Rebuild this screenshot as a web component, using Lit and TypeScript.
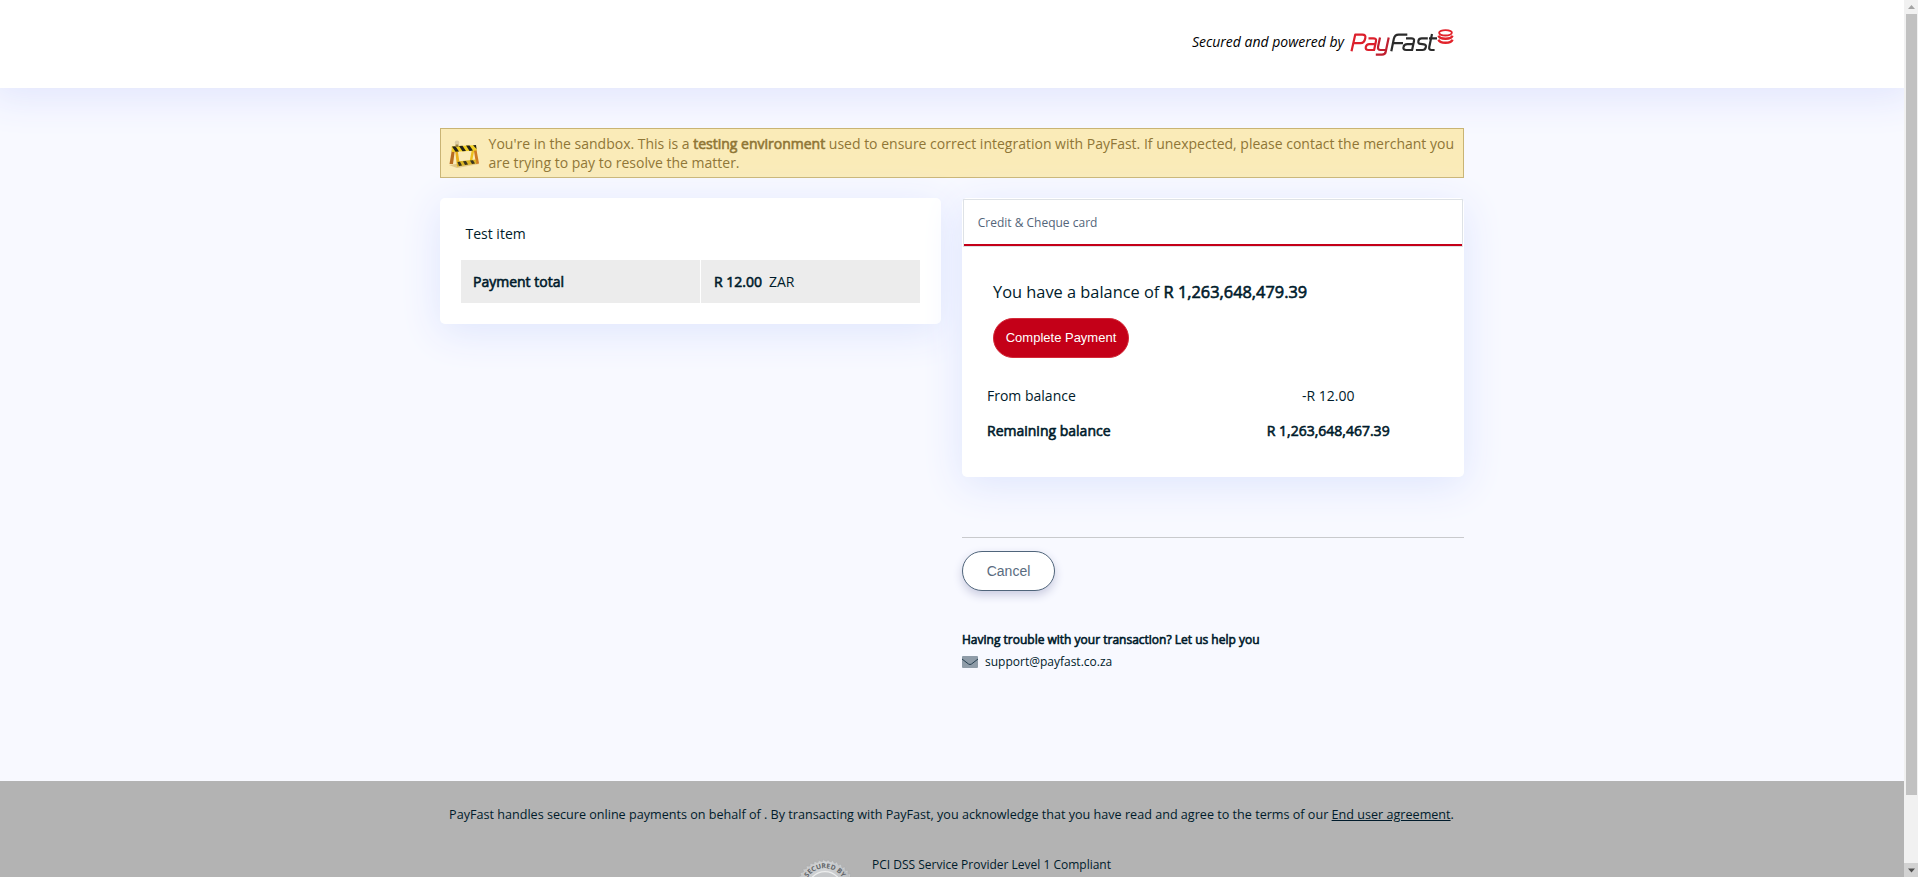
import { LitElement, html, css, svg } from "lit";
import { customElement } from "lit/decorators.js";

const teeth = Array.from({ length: 40 }, (_, i) => i * 9);

@customElement("app-root")
export class AppRoot extends LitElement {
  static styles = css`
    :host { display: flex; width: 100%; height: 877px; overflow: hidden; background: #f8f9ff;
      font-family: "Open Sans", sans-serif; font-size: 14px; color: #001b2b; }
    * { box-sizing: border-box; }
    .page { width: 1904px; height: 877px; overflow: hidden; display: flex; flex-direction: column; }
    header { height: 88px; flex: none; background: #fff; box-shadow: 0 0 40px 10px #e1e5fd; }
    .wrap { width: 1024px; margin: 0 auto; }
    .brand { display: flex; justify-content: flex-end; padding: 28px 8px 0 0; color: #000; }
    .brand em { line-height: 28px; margin-right: 6px; }
    .logo { display: block; width: 106px; height: 30px; margin-top: 1px; }
    main { height: 693px; flex: none; padding-top: 40px; }
    .b { -webkit-text-stroke: 0.6px currentColor; }
    .notice { height: 50px; border: 1px solid #c9b474; background: #faebb8; color: #8f7636;
      display: flex; padding: 5px 0 0 7px; line-height: 19px; white-space: nowrap; }
    .notice svg { width: 32px; height: 30px; margin: 6px 8.6px 0 0; flex: none; }
    .cols { display: flex; gap: 21px; padding-top: 20px; align-items: flex-start; }
    .card { background: #fff; border-radius: 5px; box-shadow: 0 8px 40px #dee5fd; }
    .left { width: 501px; height: 126px; padding: 26px 21px 0; }
    .item { padding-left: 4.5px; line-height: 20px; }
    .total { display: grid; grid-template-columns: 239px 219px; gap: 1px; margin-top: 16px; line-height: 43px; }
    .total div { background: #ececec; height: 43px; padding-left: 12px; }
    .total div + div { padding-left: 13px; }
    .zar { margin-left: 7px; }
    .right { width: 502px; }
    .pay { height: 279px; padding: 1px; }
    .tab { height: 48px; border: 1px solid #dee2e6; font-size: 12px; line-height: 46px; padding-left: 13.7px;
      color: #53657a; box-shadow: inset 0 -2px #c40018; }
    .bal { font-size: 16.38px; line-height: 22px; margin: 34px 0 0 30px; }
    .go { display: block; width: 136px; height: 40px; margin: 15px 0 0 30px; border-radius: 20px;
      border: 1px solid #d32a38; background: #c40018; color: #fff; font: 13px "Liberation Sans", sans-serif; padding: 0 0 1px; }
    .rows { display: grid; grid-template-columns: 228px 226.4px; margin: 20px 0 0 24px; line-height: 35px; }
    .mid { text-align: center; }
    .rule { height: 1px; background: #c9cacd; margin-top: 60px; }
    .cancel { display: block; width: 93px; height: 40px; margin-top: 13px; border-radius: 20px; border: 1px solid #50657b;
      background: #fff; color: #5a6c80; font: 14px "Liberation Sans", sans-serif; box-shadow: 0 4px 10px #c9cbe0; padding: 0; }
    .help { font-size: 12px; line-height: 18px; margin-top: 40px; }
    .mail { font-size: 12px; line-height: 18px; display: flex; align-items: center; gap: 7px; margin-top: 4px; }
    .mail svg { width: 16px; height: 12px; }
    footer { height: 96px; flex: none; background: #b3b3b3; overflow: hidden; padding-top: 25px; }
    .terms { font-size: 12.6px; line-height: 18px; text-align: center; white-space: nowrap; padding-right: 1px; }
    .pci { display: flex; margin-top: 15px; padding-left: 355px; font-size: 12px; line-height: 18px; }
    .pci svg { width: 60px; height: 60px; margin-top: 20px; flex: none; }
    .pci span { margin: 17px 0 0 17px; }
    .bar { width: 14px; height: 877px; background: #f1f1f1; display: flex; flex-direction: column; flex: none; }
    .bar svg { width: 14px; height: 14px; display: block; flex: none; }
    .thumb { width: 11px; height: 781px; margin-left: 2px; background: #c1c1c1; }
    .bar .down { margin-top: auto; background: #d2d2d2; }
  `;

  logo() {
    return html`<svg class="logo" viewBox="0 0 106 30" fill="none" stroke-width="2.2" stroke-linejoin="round">
      <g stroke="#dc1f2b">
        <path d="M1.5 22.3L5.2 5.7H12.5Q16 5.7 15.3 9Q14.5 14.1 10.5 14.1H4" />
        <path d="M18.5 9.3H23.3Q26.6 9.3 26 12L24.1 21H18.4Q15.2 21 15.8 18Q16.4 15.1 19.3 15.1H25" />
        <path d="M30 8.5L28.1 17.5Q27.4 21 30.5 21H35.2M38.7 8.5L35.7 22.8Q35.2 25.7 32 25.7H25.8" stroke="#c01f2f" />
      </g>
      <g stroke="#2b2b2b">
        <path d="M41.3 22.2L43.8 10Q44.7 5.7 48.6 5.7H57.3M43 14.1H53" />
        <path d="M56 9.3H61.3Q64.6 9.3 64 12L62.1 21H56.2Q52.8 21 53.5 18Q54.1 15.1 57.3 15.1H63" />
        <path d="M77.8 9.3H71.7Q68.8 9.3 68.4 11.8Q67.9 14.7 70.5 14.9L74 15.3Q76.5 15.6 75.8 18.3Q75.2 21 72.5 21H65.9" />
        <path d="M82 5L79.3 17.7Q78.6 21 81.5 21H84.6M79 9.3H87" />
      </g>
      <g stroke="#e2232b">
        <ellipse cx="95.500" cy="3.800" rx="6.400" ry="2.700" stroke-width="1.8" />
        <path d="M88.500 6.600C89.800 10.700 101.200 10.700 102.500 6.600M88.500 10.600C89.800 14.800 101.200 14.800 102.500 10.600" stroke-width="2.400" />
      </g>
    </svg>`;
  }

  barrier() {
    return html`<svg viewBox="0 0 32 30">
      <path d="M1 25L28 21L31 24L9 28Z" fill="#c6a458" opacity=".5" />
      <path d="M4 9L7 9L5 24L1.5 24Z" fill="#b86c20" /><path d="M7 9L9.500 9L12 26L9 26.500Z" fill="#e9b01c" />
      <path d="M25.500 8L28 7L31 23.500L28 24Z" fill="#cf7a22" /><path d="M24 9L26.500 9L24 22L21.500 22Z" fill="#edc020" />
      <path d="M3.500 6.500L28 5L28.500 10.500L4 12Z" fill="#f2cf22" />
      <path d="M4 6.500L7.500 6.300L11 11.500L7.500 11.800ZM11 6L14.500 5.800L18 11L14.500 11.300ZM18 5.600L21.500 5.400L25 10.600L21.500 10.900ZM25 5.200L28 5L28.500 9Z" fill="#24231a" />
      <path d="M9 21.500L28 19.500L28.500 23.500L9.500 26.500Z" fill="#d9b324" />
      <path d="M9.500 22L12 21.700L14 25.500L11 26ZM15 21.200L18 20.900L20 24.600L17 25ZM22 20.500L25 20.200L27 23.500L24 24Z" fill="#38331f" />
      <circle cx="9" cy="2.800" r="2.300" fill="#dccda3" /><path d="M7.500 4.500H10.500V7H7.500Z" fill="#9a8240" />
    </svg>`;
  }

  seal() {
    return html`<svg viewBox="0 0 52 52">
      <defs><linearGradient id="sg"><stop offset="0" stop-color="#c2c4c6" /><stop offset=".5" stop-color="#d3d5d7" /><stop offset="1" stop-color="#b9bbbd" /></linearGradient></defs>
      ${teeth.map((a) => svg`<path d="M23.500 3L24.500 .3L27.500 3Z" fill="#cdcfd1" stroke="#a2a4a6" stroke-width=".3" transform="rotate(${a} 26 26)" />`)}
      <circle cx="26" cy="26" r="23.800" fill="url(#sg)" />
      <circle cx="26" cy="26" r="15" fill="#c6c8ca" stroke="#eceded" stroke-width="1" />
      <path id="arc" d="M8 26A18 18 0 0 1 44 26" fill="none" />
      <text font-family="Open Sans" font-size="5.900" font-weight="700" fill="#606366" text-anchor="middle"><textPath href="#arc" startOffset="50%">SECURED BY</textPath></text>
    </svg>`;
  }

  render() {
    return html`
      <div class="page">
        <header><div class="wrap brand"><em>Secured and powered by</em>${this.logo()}</div></header>
        <main><div class="wrap">
          <div class="notice">${this.barrier()}
            <div>You're in the sandbox. This is a <span class="b">testing environment</span> used to ensure correct integration with PayFast. If unexpected, please contact the merchant you<br />are trying to pay to resolve the matter.</div>
          </div>
          <div class="cols">
            <section class="card left">
              <div class="item">Test item</div>
              <div class="total"><div class="b">Payment total</div><div><span class="b">R 12.00</span><span class="zar">ZAR</span></div></div>
            </section>
            <div class="right">
              <section class="card pay">
                <div class="tab">Credit &amp; Cheque card</div>
                <div class="bal">You have a balance of <span class="b">R 1,263,648,479.39</span></div>
                <button class="go">Complete Payment</button>
                <div class="rows">
                  <div>From balance</div><div class="mid">-R 12.00</div>
                  <div class="b">Remaining balance</div><div class="mid b">R 1,263,648,467.39</div>
                </div>
              </section>
              <div class="rule"></div>
              <button class="cancel">Cancel</button>
              <div class="help b">Having trouble with your transaction? Let us help you</div>
              <div class="mail"><svg viewBox="0 0 16 12"><rect width="16" height="12" rx="1" fill="#8f9ca8" /><path d="M0 3L6.5 8Q8 9 9.5 8L16 3" fill="none" stroke="#263f50" stroke-width="1" /></svg>support@payfast.co.za</div>
            </div>
          </div>
        </div></main>
        <footer><div class="wrap">
          <div class="terms">PayFast handles secure online payments on behalf of . By transacting with PayFast, you acknowledge that you have read and agree to the terms of our <u>End user agreement</u>.</div>
          <div class="pci">${this.seal()}<span>PCI DSS Service Provider Level 1 Compliant</span></div>
        </div></footer>
      </div>
      <div class="bar">
        <svg viewBox="0 0 14 14"><path d="M4 9L7.5 5L11 9Z" fill="#a3a3a3" /></svg>
        <div class="thumb"></div>
        <svg class="down" viewBox="0 0 14 14"><path d="M4 5.500L7.500 9.500L11 5.500Z" fill="#505050" /></svg>
      </div>`;
  }
}
